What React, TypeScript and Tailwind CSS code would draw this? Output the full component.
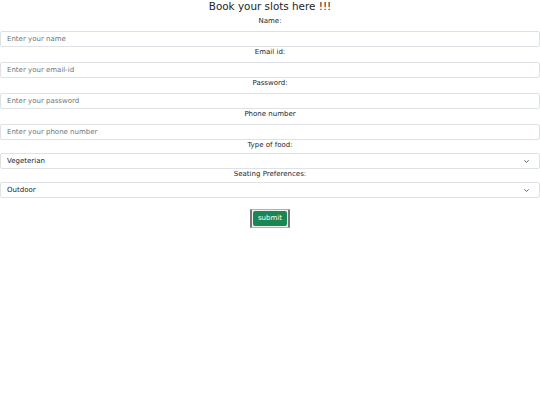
import React from 'react';

const FIELDS = [
  { label: 'Name:', placeholder: 'Enter your name', type: 'text' },
  { label: 'Email id:', placeholder: 'Enter your email-id', type: 'email' },
  { label: 'Password:', placeholder: 'Enter your password', type: 'password' },
  { label: 'Phone number', placeholder: 'Enter your phone number', type: 'tel' },
];

const SELECTS = [
  { label: 'Type of food:', value: 'Vegeterian' },
  { label: 'Seating Preferences:', value: 'Outdoor' },
];

function Chevron() {
  return (
    <svg width="7" height="5" viewBox="0 0 16 16" className="text-[#343a40]">
      <path d="M2 5l6 6 6-6" fill="none" stroke="currentColor" strokeWidth="2.5" strokeLinecap="round" strokeLinejoin="round" />
    </svg>
  );
}

export default function App() {
  return (
    <div className="w-[540px] h-[405px] bg-white text-[#212529]" style={{ fontFamily: '"DejaVu Sans", sans-serif' }}>
      <h1 className="text-center text-[10.4px] leading-[12px] pb-[4px] font-normal">Book your slots here !!!</h1>

      <form className="flex flex-col">
        {FIELDS.map(f => (
          <div key={f.label} className="flex flex-col">
            <label className="text-center text-[7px] leading-[11px] mb-[4px]">{f.label}</label>
            <input
              type={f.type}
              placeholder={f.placeholder}
              className="h-[16px] w-full rounded-[2px] border border-[#dee2e6] px-[6px] text-[7px] placeholder:text-[#6c757d] outline-none"
            />
          </div>
        ))}

        {SELECTS.map(s => (
          <div key={s.label} className="flex flex-col">
            <label className="text-center text-[7px] leading-[11px] mb-[2px]">{s.label}</label>
            <div className="h-[16px] w-full rounded-[2px] border border-[#dee2e6] px-[6px] flex items-center justify-between text-[7px]">
              <span>{s.value}</span>
              <span className="pr-[3px] flex items-center"><Chevron /></span>
            </div>
          </div>
        ))}

        <div className="flex justify-center mt-[11px]">
          <span className="inline-flex border-x-2 border-y border-[#767676] border-t-[#b0b0b0] border-b-[#b0b0b0] bg-[#efefef] px-[1px] py-[1px] rounded-[1px]">
            <span className="bg-[#198754] text-white text-[7px] leading-[15px] px-[5px] rounded-[2px]">submit</span>
          </span>
        </div>
      </form>
    </div>
  );
}
